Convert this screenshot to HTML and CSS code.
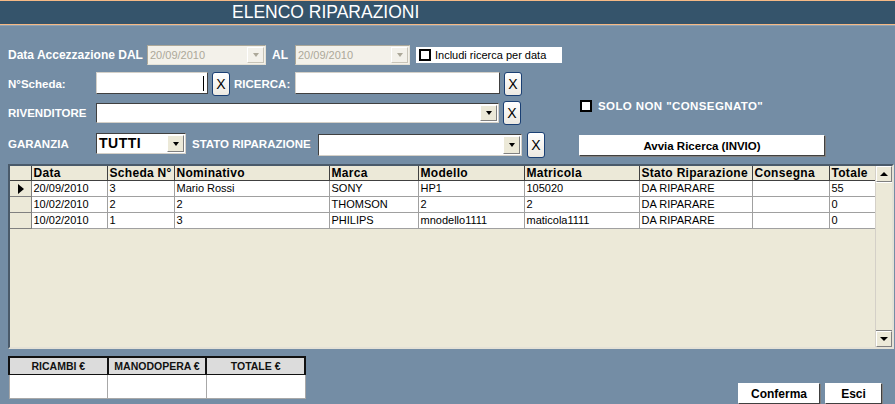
FILE: index.html
```html
<!DOCTYPE html>
<html>
<head>
<meta charset="utf-8">
<link rel="stylesheet" href="styles.css">
</head>
<body>
<div class="win">
  <div class="titlebar"><span class="title">ELENCO RIPARAZIONI</span></div>
  <div class="form">
    <div class="left">
      <div class="row r1">
        <span class="lbl l-data">Data Accezzazione DAL</span>
        <div class="combo dis c-d1"><span class="val">20/09/2010</span><span class="dd"><i></i></span></div>
        <span class="lbl l-al">AL</span>
        <div class="combo dis c-d2"><span class="val">20/09/2010</span><span class="dd"><i></i></span></div>
        <label class="chkbox"><span class="sq"></span>Includi ricerca per data</label>
      </div>
      <div class="row r2">
        <span class="lbl l-first">N°Scheda:</span>
        <div class="txt t-scheda"><span class="caret"></span></div>
        <span class="xbtn">X</span>
        <span class="lbl l-ric">RICERCA:</span>
        <div class="txt t-ric"></div>
        <span class="xbtn">X</span>
      </div>
      <div class="row r3">
        <span class="lbl l-first">RIVENDITORE</span>
        <div class="combo en c-riv"><span class="val"></span><span class="dd"><i></i></span></div>
        <span class="xbtn">X</span>
      </div>
      <div class="row r4">
        <span class="lbl l-first">GARANZIA</span>
        <div class="combo en c-gar"><span class="val big">TUTTI</span><span class="dd"><i></i></span></div>
        <span class="lbl l-stato">STATO RIPARAZIONE</span>
        <div class="combo en c-stato"><span class="val"></span><span class="dd"><i></i></span></div>
        <span class="xbtn">X</span>
      </div>
    </div>
    <div class="right">
      <label class="solo"><span class="sq"></span>SOLO NON "CONSEGNATO"</label>
      <button class="btn avvia">Avvia Ricerca (INVIO)</button>
    </div>
  </div>
  <div class="grid">
    <div class="gridbody">
      <table class="data">
        <colgroup>
          <col class="w-sel"><col class="w-data"><col class="w-sch"><col class="w-nom"><col class="w-mar"><col class="w-mod"><col class="w-mat"><col class="w-sta"><col class="w-con"><col class="w-tot">
        </colgroup>
        <thead>
          <tr><th class="sel"></th><th>Data</th><th>Scheda N°</th><th>Nominativo</th><th>Marca</th><th>Modello</th><th>Matricola</th><th>Stato Riparazione</th><th>Consegna</th><th>Totale</th></tr>
        </thead>
        <tbody>
          <tr><td class="sel"><span class="arrow"></span></td><td>20/09/2010</td><td>3</td><td>Mario Rossi</td><td>SONY</td><td>HP1</td><td>105020</td><td>DA RIPARARE</td><td></td><td>55</td></tr>
          <tr><td class="sel"></td><td>10/02/2010</td><td>2</td><td>2</td><td>THOMSON</td><td>2</td><td>2</td><td>DA RIPARARE</td><td></td><td>0</td></tr>
          <tr><td class="sel"></td><td>10/02/2010</td><td>1</td><td>3</td><td>PHILIPS</td><td>mnodello1111</td><td>maticola1111</td><td>DA RIPARARE</td><td></td><td>0</td></tr>
        </tbody>
      </table>
    </div>
    <div class="vscroll">
      <span class="sbtn up"><i></i></span>
      <span class="track"></span>
      <span class="sbtn down"><i></i></span>
    </div>
  </div>
  <div class="bottom">
    <table class="totals">
      <tr><th>RICAMBI €</th><th>MANODOPERA €</th><th>TOTALE €</th></tr>
      <tr><td></td><td></td><td></td></tr>
    </table>
    <div class="btns">
      <button class="btn conf">Conferma</button>
      <button class="btn esci">Esci</button>
    </div>
  </div>
</div>
</body>
</html>
```

FILE: styles.css
```css
html, body {
  margin: 0;
  padding: 0;
}
body {
  width: 895px;
  height: 404px;
  overflow: hidden;
  background: #748da5;
  font-family: "Liberation Sans", Arial, sans-serif;
  font-size: 11px;
  color: #000;
}
.win {
  width: 895px;
  height: 404px;
  display: flex;
  flex-direction: column;
}
.titlebar {
  height: 23px;
  border-top: 1px solid #f6b985;
  border-bottom: 1px solid #f6b985;
  background: #35546b;
  box-shadow: 0 1px 0 #8ea3b5;
}
.title {
  display: block;
  padding-left: 232px;
  color: #fff;
  font-size: 17.5px;
  line-height: 23px;
}
.form {
  display: flex;
  margin-top: 20px;
  padding-left: 8px;
}
.left {
  width: 571px;
  display: flex;
  flex-direction: column;
}
.row {
  display: flex;
  align-items: center;
}
.r1 { height: 20px; }
.r2 { height: 24px; margin-top: 7px; }
.r3 { height: 24px; margin-top: 5px; }
.r4 { height: 27px; margin-top: 5px; }
.lbl {
  color: #fff;
  font-weight: bold;
  font-size: 11.5px;
  white-space: nowrap;
}
.l-data { width: 139px; font-size: 12px; }
.l-al { width: 23px; margin-left: 6px; font-size: 12px; }
.l-first { width: 88px; }
.l-ric { width: 61px; margin-left: 4px; }
.l-stato { width: 126px; margin-left: 6px; }

.combo {
  display: flex;
  align-items: stretch;
  box-sizing: border-box;
  height: 20px;
  border: 1px solid;
  border-color: #404040 #d4d0c8 #d4d0c8 #404040;
  background: #fff;
}
.combo .val {
  flex: 1;
  padding-left: 2px;
  line-height: 18px;
  overflow: hidden;
}
.combo .val.big {
  font-size: 14px;
  font-weight: bold;
  letter-spacing: 0.5px;
}
.combo .dd {
  width: 17px;
  margin: 1px 1px 1px 0;
  background: #ece9d8;
  border: 1px solid;
  border-color: #fff #808080 #808080 #fff;
  box-sizing: border-box;
  display: flex;
  align-items: center;
  justify-content: center;
}
.combo .dd i {
  width: 0;
  height: 0;
  border-left: 3px solid transparent;
  border-right: 3px solid transparent;
  border-top: 4px solid #000;
}
.combo.dis {
  background: #f3f1ea;
  border-color: #aca899 #e4e1d6 #e4e1d6 #aca899;
  color: #aca899;
}
.combo.dis .dd {
  background: #f3f1ea;
  border-color: #fff #c8c4b8 #c8c4b8 #fff;
}
.combo.dis .dd i { border-top-color: #aca899; }
.c-d1 { width: 119px; }
.c-d2 { width: 115px; }
.c-riv { width: 403px; }
.c-gar { width: 90px; height: 21px; }
.c-stato { width: 204px; height: 22px; margin-top: 3px; }

.chkbox {
  display: flex;
  align-items: center;
  box-sizing: border-box;
  width: 146px;
  height: 16px;
  margin-left: 6px;
  background: #fff;
  padding-left: 3px;
  font-size: 11px;
  color: #000;
}
.sq {
  display: inline-block;
  box-sizing: border-box;
  width: 12px;
  height: 12px;
  border: 2px solid #000;
  background: #fff;
  margin-right: 4px;
}
.txt {
  box-sizing: border-box;
  height: 22px;
  background: #fff;
  border: 1px solid;
  border-color: #d4d0c8 #404040 #404040 #d4d0c8;
  position: relative;
  align-self: flex-start;
}
.t-scheda { width: 112px; }
.t-ric { width: 205px; }
.caret {
  position: absolute;
  right: 3px;
  top: 3px;
  width: 1px;
  height: 15px;
  background: #000;
}
.xbtn {
  box-sizing: border-box;
  width: 18px;
  height: 24px;
  margin-left: 4px;
  border: 1px solid #1a3f73;
  border-radius: 3px;
  background: linear-gradient(#ffffff, #ece9e2);
  display: flex;
  align-items: center;
  justify-content: center;
  font-size: 14px;
  color: #000;
}
.r4 .xbtn { margin-top: 3px; margin-left: 5px; height: 26px; }

.right {
  display: flex;
  flex-direction: column;
  margin-top: 55px;
}
.solo {
  display: flex;
  align-items: center;
  height: 12px;
  color: #fff;
  font-weight: bold;
  font-size: 11.5px;
  letter-spacing: 0.4px;
  margin-left: 1px;
}
.solo .sq { margin-right: 6px; }
.btn {
  font-family: "Liberation Sans", Arial, sans-serif;
  font-weight: bold;
  font-size: 11px;
  color: #000;
  background: #fff;
  border: 1px solid;
  border-color: #fff #404040 #404040 #fff;
  box-shadow: 1px 1px 0 #808080;
  padding: 0;
  box-sizing: border-box;
  height: 21px;
}
.avvia {
  width: 246px;
  margin-top: 23px;
  font-size: 11.5px;
}

.grid {
  display: flex;
  margin: 7px 0 0 8px;
  width: 886px;
  height: 186px;
  box-sizing: border-box;
  border: 2px solid;
  border-color: #4a5a6a #e4e1d6 #e4e1d6 #4a5a6a;
  background: #ece9d8;
}
.gridbody {
  width: 866px;
  overflow: hidden;
}
.data {
  border-collapse: collapse;
  table-layout: fixed;
  width: 867px;
}
.w-sel { width: 21px; }
.w-data { width: 76px; }
.w-sch { width: 67px; }
.w-nom { width: 155px; }
.w-mar { width: 89px; }
.w-mod { width: 106px; }
.w-mat { width: 115px; }
.w-sta { width: 113px; }
.w-con { width: 77px; }
.w-tot { width: 48px; }
.data th, .data td {
  border: 1px solid #a0a0a0;
  padding: 0 0 0 2px;
  text-align: left;
  white-space: nowrap;
  overflow: hidden;
}
.data th {
  height: 14px;
  line-height: 14px;
  background: #ece9d8;
  font-weight: bold;
  font-size: 12px;
  letter-spacing: 0.3px;
  border-top: none;
  border-bottom: 1px solid #404040;
  border-color: #404040;
}
.data th:first-child, .data td:first-child { border-left: none; }
.data td {
  height: 15px;
  line-height: 15px;
  background: #fff;
  font-size: 11px;
}
.data td.sel {
  background: #ece9d8;
  border-color: #808080;
  position: relative;
}
.arrow {
  position: absolute;
  left: 8px;
  top: 3px;
  width: 0;
  height: 0;
  border-top: 5px solid transparent;
  border-bottom: 5px solid transparent;
  border-left: 6px solid #000;
}
.vscroll {
  width: 16px;
  display: flex;
  flex-direction: column;
  background: #f1efe4;
  border-left: 1px solid #d4d0c8;
}
.sbtn {
  height: 16px;
  display: flex;
  align-items: center;
  justify-content: center;
  background: #ece9d8;
  box-sizing: border-box;
  border: 1px solid;
  border-color: #fff #808080 #808080 #fff;
}
.sbtn i {
  width: 0;
  height: 0;
  border-left: 4px solid transparent;
  border-right: 4px solid transparent;
}
.sbtn.up i { border-bottom: 4px solid #000; }
.sbtn.down i { border-top: 4px solid #000; }
.track {
  flex: 1;
  background: #ece9d8;
  border-top: 1px solid #fff;
  border-bottom: 1px solid #808080;
}

.bottom {
  display: flex;
  justify-content: space-between;
  align-items: flex-end;
  margin-top: 7px;
  padding-left: 8px;
  padding-right: 13px;
}
.totals {
  border-collapse: collapse;
  width: 298px;
  border: 1px solid #404040;
  margin-bottom: 5px;
}
.totals th {
  background: #dcdcdc;
  height: 16px;
  font-size: 10.5px;
  font-weight: bold;
  color: #111;
  border: 2px solid #111;
  border-bottom: 1px solid #111;
  padding: 0;
  width: 33%;
}
.totals td {
  background: #fff;
  height: 21px;
  border: 1px solid #a8a8a8;
}
.btns {
  display: flex;
  gap: 5px;
}
.conf { width: 82px; font-size: 12px; }
.esci { width: 57px; font-size: 12px; }
```
